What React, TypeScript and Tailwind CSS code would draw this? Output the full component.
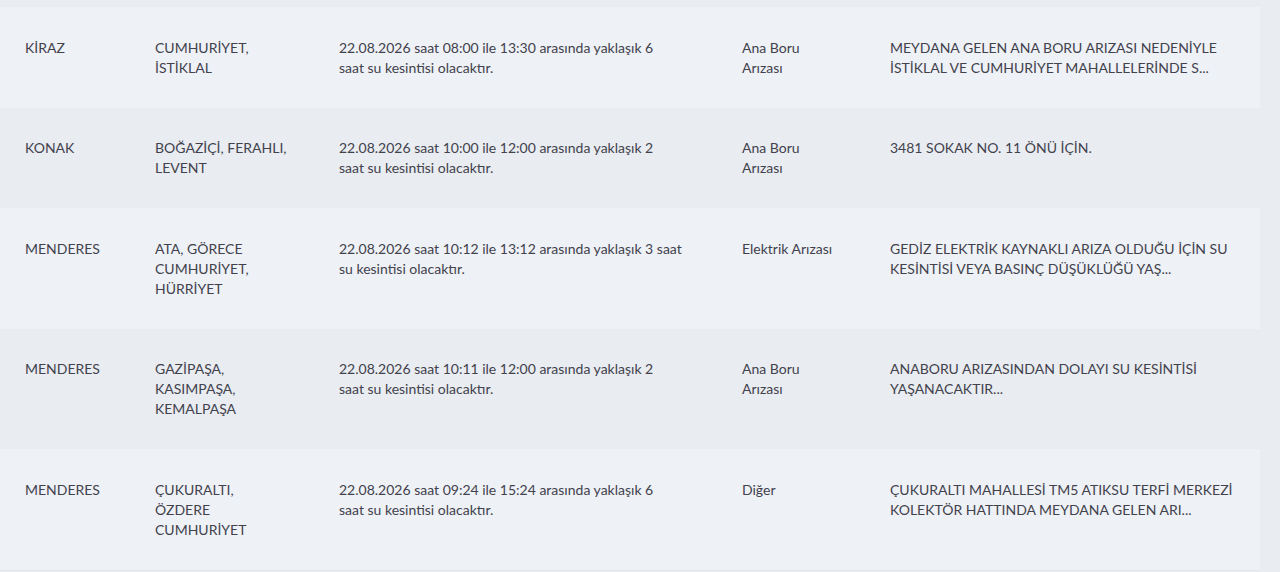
const rows = [
  {
    ilce: "KİRAZ",
    mahalle: ["CUMHURİYET,", "İSTİKLAL"],
    aciklama: ["22.08.2026 saat 08:00 ile 13:30 arasında yaklaşık 6", "saat su kesintisi olacaktır."],
    tip: ["Ana Boru", "Arızası"],
    detay: ["MEYDANA GELEN ANA BORU ARIZASI NEDENİYLE", "İSTİKLAL VE CUMHURİYET MAHALLELERİNDE S..."],
  },
  {
    ilce: "KONAK",
    mahalle: ["BOĞAZİÇİ, FERAHLI,", "LEVENT"],
    aciklama: ["22.08.2026 saat 10:00 ile 12:00 arasında yaklaşık 2", "saat su kesintisi olacaktır."],
    tip: ["Ana Boru", "Arızası"],
    detay: ["3481 SOKAK NO. 11 ÖNÜ İÇİN."],
  },
  {
    ilce: "MENDERES",
    mahalle: ["ATA, GÖRECE", "CUMHURİYET,", "HÜRRİYET"],
    aciklama: ["22.08.2026 saat 10:12 ile 13:12 arasında yaklaşık 3 saat", "su kesintisi olacaktır."],
    tip: ["Elektrik Arızası"],
    detay: ["GEDİZ ELEKTRİK KAYNAKLI ARIZA OLDUĞU İÇİN SU", "KESİNTİSİ VEYA BASINÇ DÜŞÜKLÜĞÜ YAŞ..."],
  },
  {
    ilce: "MENDERES",
    mahalle: ["GAZİPAŞA,", "KASIMPAŞA,", "KEMALPAŞA"],
    aciklama: ["22.08.2026 saat 10:11 ile 12:00 arasında yaklaşık 2", "saat su kesintisi olacaktır."],
    tip: ["Ana Boru", "Arızası"],
    detay: ["ANABORU ARIZASINDAN DOLAYI SU KESİNTİSİ", "YAŞANACAKTIR..."],
  },
  {
    ilce: "MENDERES",
    mahalle: ["ÇUKURALTI,", "ÖZDERE", "CUMHURİYET"],
    aciklama: ["22.08.2026 saat 09:24 ile 15:24 arasında yaklaşık 6", "saat su kesintisi olacaktır."],
    tip: ["Diğer"],
    detay: ["ÇUKURALTI MAHALLESİ TM5 ATIKSU TERFİ MERKEZİ", "KOLEKTÖR HATTINDA MEYDANA GELEN ARI..."],
  },
];

const Lines = ({ lines }: { lines: string[] }) => (
  <>
    {lines.map((l, i) => (
      <span key={i} className="block whitespace-nowrap">
        {l}
      </span>
    ))}
  </>
);

export default function App() {
  return (
    <div
      className="min-h-[572px] w-full bg-[#e9ecf1] pt-[7px] text-[14px] leading-5 text-[#42424d]"
      style={{ fontFamily: "Lato, 'Noto Sans', sans-serif" }}
    >
      <table className="w-[1260px] table-fixed border-collapse border-b border-[#e2e5ea]">
        <colgroup>
          <col className="w-[130px]" />
          <col className="w-[184px]" />
          <col className="w-[403px]" />
          <col className="w-[148px]" />
          <col className="w-[395px]" />
        </colgroup>
        <tbody>
          {rows.map((r, i) => (
            <tr key={i} className={i % 2 === 0 ? "bg-[#eef1f6]" : "bg-[#e9ecf1]"}>
              <td className="px-[25px] pt-[30.5px] pb-[30px] align-top">{r.ilce}</td>
              <td className="px-[25px] pt-[30.5px] pb-[30px] align-top">
                <Lines lines={r.mahalle} />
              </td>
              <td className="px-[25px] pt-[30.5px] pb-[30px] align-top">
                <Lines lines={r.aciklama} />
              </td>
              <td className="px-[25px] pt-[30.5px] pb-[30px] align-top">
                <Lines lines={r.tip} />
              </td>
              <td className="px-[25px] pt-[30.5px] pb-[30px] align-top">
                <Lines lines={r.detay} />
              </td>
            </tr>
          ))}
        </tbody>
      </table>
    </div>
  );
}
